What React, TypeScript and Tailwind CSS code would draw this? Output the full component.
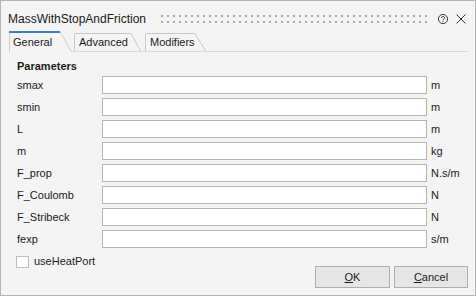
import React from 'react';

const FONT = { fontFamily: '"Liberation Sans", Arial, sans-serif' };

const PARAMS: { name: string; unit: string }[] = [
  { name: 'smax', unit: 'm' },
  { name: 'smin', unit: 'm' },
  { name: 'L', unit: 'm' },
  { name: 'm', unit: 'kg' },
  { name: 'F_prop', unit: 'N.s/m' },
  { name: 'F_Coulomb', unit: 'N' },
  { name: 'F_Stribeck', unit: 'N' },
  { name: 'fexp', unit: 's/m' },
];

function Grip() {
  return (
    <svg className="w-full h-[8px] block" aria-hidden>
      <defs>
        <pattern id="grip" width="6" height="6" patternUnits="userSpaceOnUse">
          <rect x="0" y="0" width="2" height="2" fill="#a8a8a8" />
        </pattern>
      </defs>
      <rect x="0" y="0" width="100%" height="8" fill="url(#grip)" />
    </svg>
  );
}

function HelpIcon() {
  return (
    <svg width="12" height="12" viewBox="0 0 12 12" fill="none" stroke="#3a3a3a" strokeWidth="1">
      <circle cx="6" cy="6" r="4.6" />
      <path d="M4.5 4.9a1.5 1.5 0 1 1 2.3 1.2c-0.6 0.3-0.8 0.6-0.8 1.2" />
      <circle cx="6" cy="8.6" r="0.55" fill="#3a3a3a" stroke="none" />
    </svg>
  );
}

function CloseIcon() {
  return (
    <svg width="12" height="12" viewBox="0 0 12 12" fill="none" stroke="#3a3a3a" strokeWidth="1">
      <path d="M1.5 1.5l9 9M10.5 1.5l-9 9" />
    </svg>
  );
}

interface TabProps {
  label: string;
  active?: boolean;
  width: number;
  flat: number;
  className: string;
}

function Tab({ label, active, width, flat, className }: TabProps) {
  const h = active ? 21 : 18;
  return (
    <div className={`relative shrink-0 ${className}`}>
      <svg className="absolute inset-0" width={width} height={h} aria-hidden>
        <path
          d={`M0.5 ${h} V0.5 H${flat} L${width - 0.5} ${h}`}
          fill="#f4f4f4"
          stroke={active ? '#d0d0d0' : '#c9c9c9'}
        />
        {active && <rect x="0" y="0" width={flat} height="2" fill="#3b80bf" />}
      </svg>
      <span className="relative block text-[11px] leading-[13px] text-[#1a1a1a]">{label}</span>
    </div>
  );
}

export default function App() {
  return (
    <div
      className="w-[476px] h-[296px] border border-[#b5b5b5] bg-[#f4f4f4] flex flex-col text-[#1a1a1a]"
      style={FONT}
    >
      {/* Title bar */}
      <div className="h-[30px] flex items-center pt-[6px] pl-[7px] pr-[8px]">
        <span className="text-[12px] leading-[14px] whitespace-nowrap">MassWithStopAndFriction</span>
        <div className="flex-1 ml-[15px]">
          <Grip />
        </div>
        <span className="ml-[9px]">
          <HelpIcon />
        </span>
        <span className="ml-[6px]">
          <CloseIcon />
        </span>
      </div>

      {/* Tabs */}
      <div className="mx-[8px] h-[21px] flex items-end border-b border-[#dadada]">
        <Tab label="General" active width={63} flat={51} className="w-[63px] h-[21px] -mb-px z-10 pl-[4px] pt-[5px]" />
        <Tab label="Advanced" width={67} flat={57} className="w-[67px] h-[18px] ml-[2px] pl-[5px] pt-[3px]" />
        <Tab label="Modifiers" width={61} flat={50} className="w-[61px] h-[18px] ml-[4px] pl-[5px] pt-[3px]" />
      </div>

      {/* Parameters */}
      <div className="pl-[16px] pt-[7px]">
        <div className="text-[11px] leading-[14px] font-bold">Parameters</div>
        <div className="mt-[3px] grid grid-cols-[85px_325px_auto] gap-y-[4px] items-center">
          {PARAMS.map(p => (
            <React.Fragment key={p.name}>
              <span className="text-[11px] leading-[13px]">{p.name}</span>
              <div className="h-[18px] bg-white border border-[#b4b4b4]" />
              <span className="pl-[4px] text-[11px] leading-[13px]">{p.unit}</span>
            </React.Fragment>
          ))}
        </div>
      </div>

      {/* Bottom row */}
      <div className="flex justify-between items-start pl-[15px] pr-[7px]">
        <label className="mt-[7px] flex items-center gap-[5px]">
          <span className="w-[13px] h-[12px] bg-white border border-[#bdbdbd]" />
          <span className="text-[11px] leading-[13px]">useHeatPort</span>
        </label>
        <div className="mt-[18px] flex gap-[4px]">
          <button className="w-[75px] h-[22px] bg-[#e6e6e6] border border-[#adadad] text-[11px] text-[#1a1a1a]">
            <span className="underline">O</span>K
          </button>
          <button className="w-[74px] h-[22px] bg-[#e6e6e6] border border-[#adadad] text-[11px] text-[#1a1a1a]">
            <span className="underline">C</span>ancel
          </button>
        </div>
      </div>
    </div>
  );
}
